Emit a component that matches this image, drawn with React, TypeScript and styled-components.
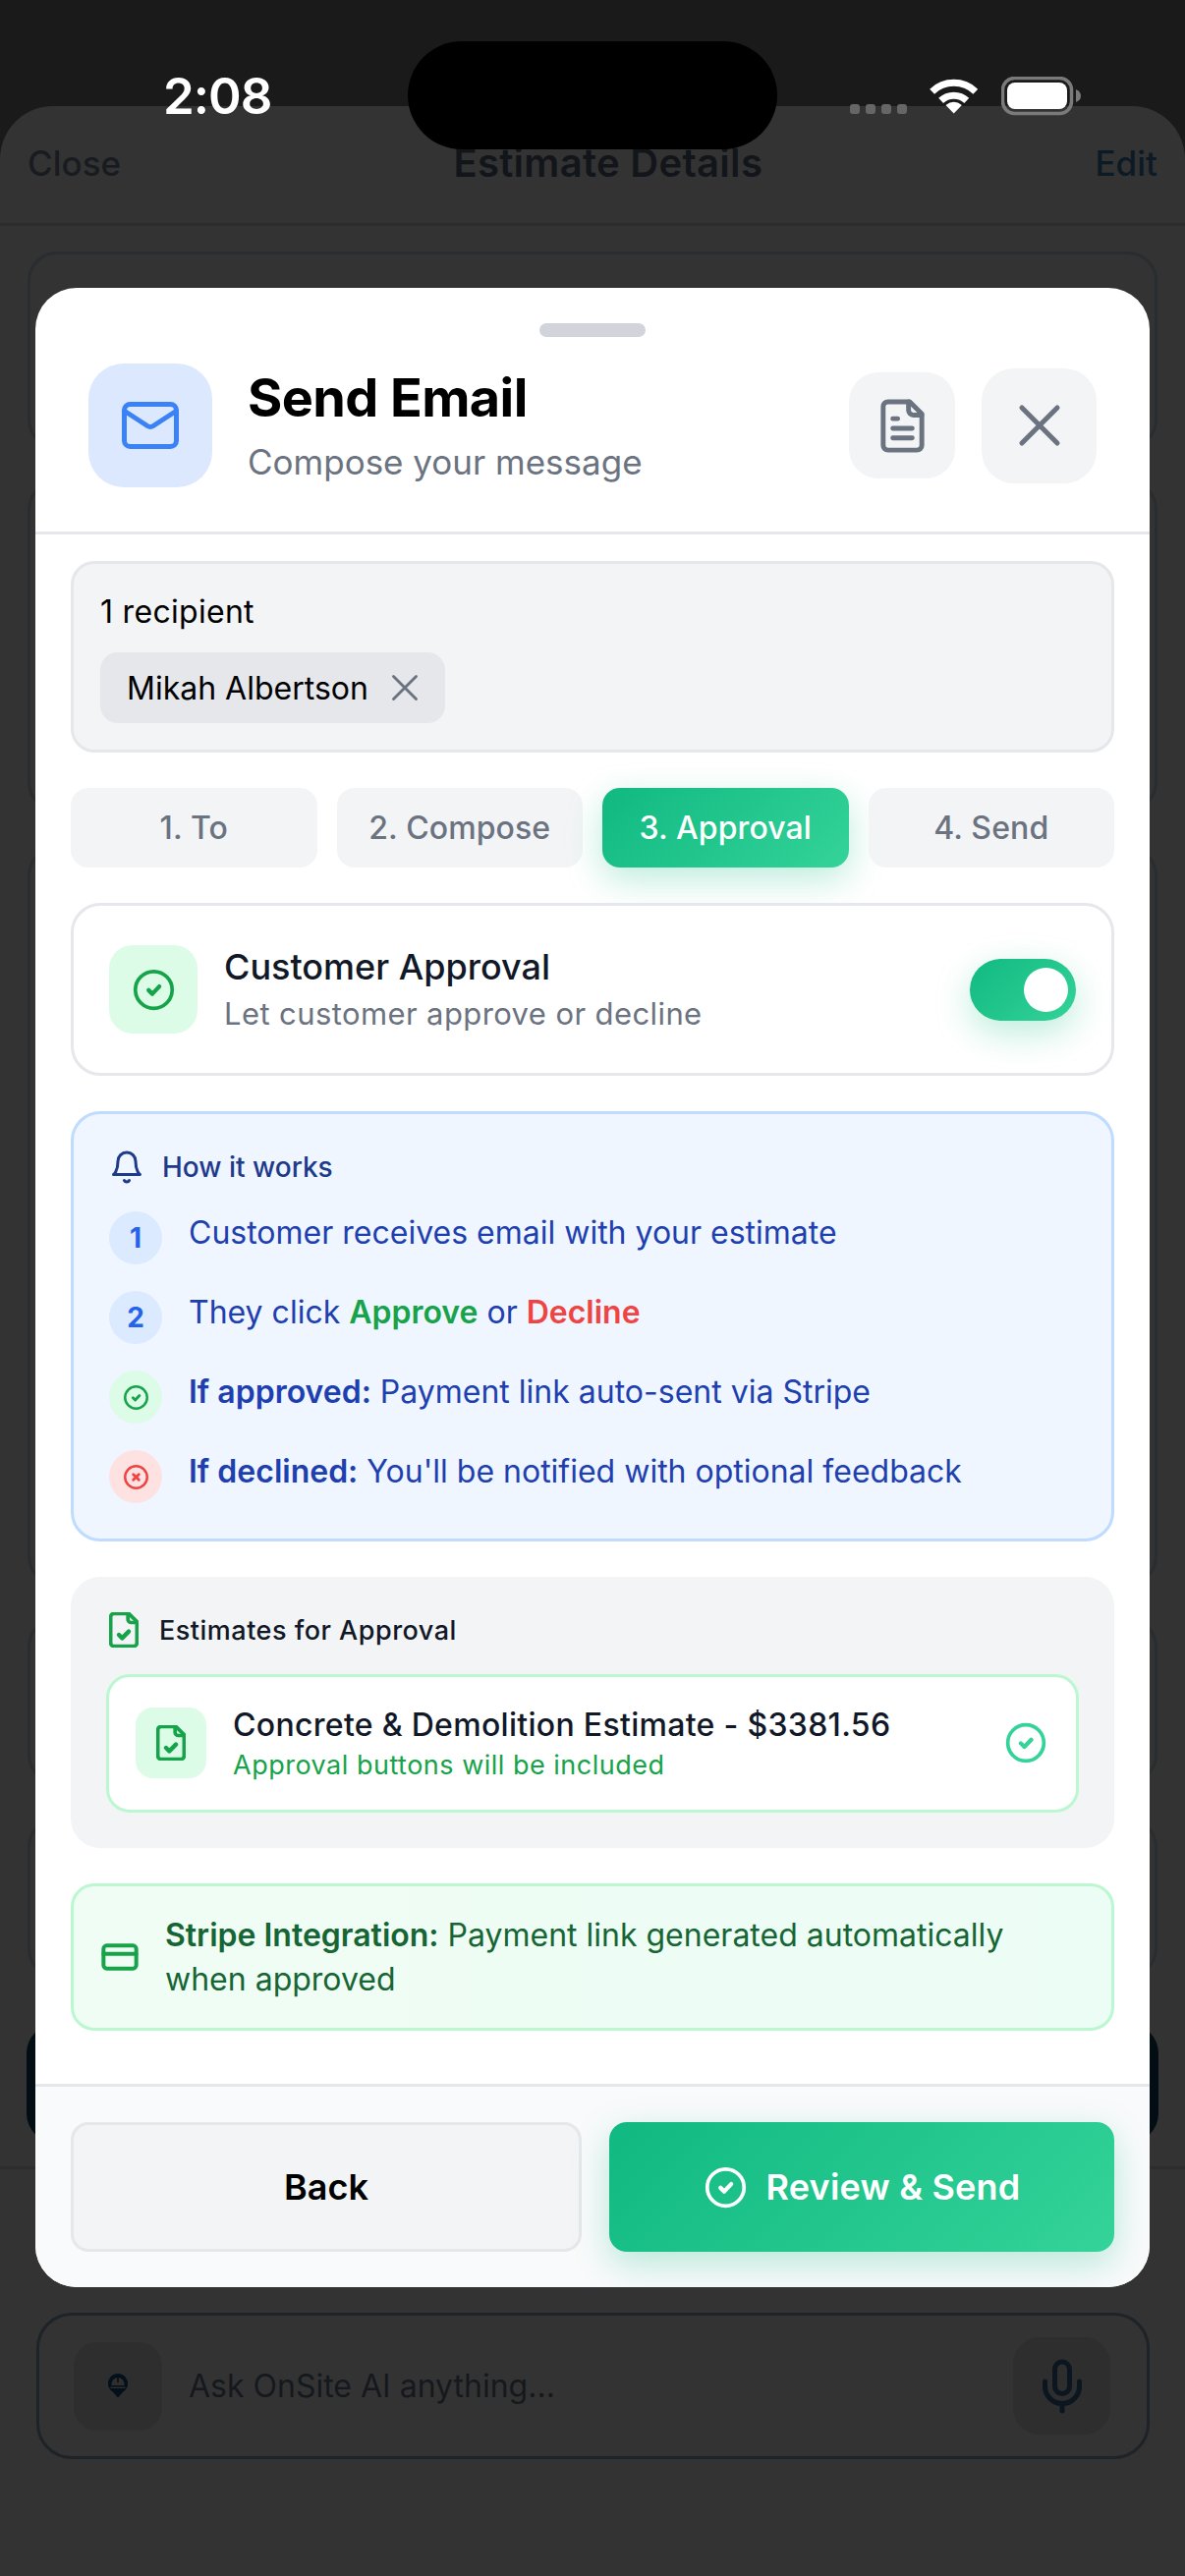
import React from "react";
import styled, { createGlobalStyle } from "styled-components";

const Global = createGlobalStyle`
  html, body { margin: 0; padding: 0; background: #1a1a1a; }
  * { box-sizing: border-box; }
  svg { flex: none; }
  body { font-family: Inter, "Liberation Sans", sans-serif; }
`;

const Page = styled.div`
  position: relative;
  width: 1206px;
  height: 2622px;
  overflow: hidden;
  background: #1a1a1a;
  padding-top: 108px;
`;

/* ---------- dimmed page behind the modal ---------- */
const Sheet = styled.div`
  height: 2514px;
  background: #333333;
  border-radius: 54px 54px 0 0;
  display: flex;
  flex-direction: column;
`;
const Nav = styled.div`
  height: 122px;
  padding: 30px 28px 0;
  border-bottom: 3px solid #2a2c2e;
  display: flex;
  justify-content: space-between;
  font-size: 35px;
  line-height: 56px;
  font-weight: 500;
  color: #181c20;
`;
const NavTitle = styled.span`
  font-weight: 600;
  font-size: 40px;
  letter-spacing: 0.3px;
  color: #12161a;
`;
const NavEdit = styled.span`
  font-weight: 500;
  color: #0c1a26;
`;
const BgList = styled.div`
  padding: 26px 28px 0;
  display: flex;
  flex-direction: column;
`;
const BgCard = styled.div<{ $h: number; $gap: number }>`
  height: ${(p) => p.$h}px;
  margin-bottom: ${(p) => p.$gap}px;
  border: 3px solid #2a2d30;
  border-radius: 30px;
`;
const BgButton = styled.div`
  height: 121px;
  background: #030d14;
  border-radius: 30px;
  margin: 0 -1px;
`;
const BgDivider = styled.div`
  height: 3px;
  margin-top: 24px;
  background: #2d2d2d;
`;
const InputBar = styled.div`
  height: 149px;
  margin: 146px 36px 0 37px;
  border: 3px solid #1e2328;
  border-radius: 36px;
  padding: 0 37px 0 35px;
  display: flex;
  align-items: center;
`;
const HelmetBox = styled.div`
  width: 90px;
  height: 90px;
  border-radius: 24px;
  background: #2e2e2e;
  display: flex;
  align-items: center;
  justify-content: center;
`;
const InputText = styled.span`
  flex: 1;
  margin-left: 27px;
  font-size: 32px;
  color: #15191e;
`;
const MicBox = styled.div`
  width: 99px;
  height: 99px;
  border-radius: 27px;
  background: #2e2e2e;
  display: flex;
  align-items: center;
  justify-content: center;
`;

/* ---------- status bar ---------- */
const Island = styled.div`
  position: absolute;
  left: 415px;
  top: 42px;
  width: 376px;
  height: 110px;
  border-radius: 55px;
  background: #000;
`;
const Time = styled.div`
  position: absolute;
  left: 166px;
  top: 67px;
  font-size: 51px;
  line-height: 62px;
  font-weight: 600;
  color: #fff;
  letter-spacing: -1px;
`;
const StatusIcons = styled.div`
  position: absolute;
  left: 865px;
  top: 78px;
  display: flex;
  align-items: flex-start;
  gap: 22px;
`;
const Dots = styled.div`
  display: flex;
  gap: 6px;
  margin-top: 28px;
`;
const Dot = styled.span`
  width: 10px;
  height: 10px;
  border-radius: 3px;
  background: #666;
`;

/* ---------- modal ---------- */
const Modal = styled.div`
  position: absolute;
  left: 36px;
  top: 293px;
  width: 1134px;
  background: #fff;
  border-radius: 42px;
  overflow: hidden;
`;
const Handle = styled.div`
  width: 108px;
  height: 14px;
  margin: 36px auto 0;
  border-radius: 7px;
  background: #d1d5db;
`;
const Header = styled.div`
  display: flex;
  align-items: center;
  padding: 27px 54px 45px;
  border-bottom: 3px solid #e5e7eb;
`;
const MailBox = styled.div`
  width: 126px;
  height: 126px;
  border-radius: 36px;
  background: #dbe8fe;
  display: flex;
  align-items: center;
  justify-content: center;
`;
const HeaderText = styled.div`
  flex: 1;
  margin-left: 36px;
`;
const Title = styled.div`
  font-size: 54px;
  line-height: 60px;
  font-weight: 700;
  color: #000;
  letter-spacing: -0.6px;
`;
const Subtitle = styled.div`
  margin-top: 14px;
  font-size: 35px;
  line-height: 42px;
  color: #6b7280;
`;
const IconBtn = styled.div<{ $size: number; $radius: number }>`
  width: ${(p) => p.$size}px;
  height: ${(p) => p.$size}px;
  border-radius: ${(p) => p.$radius}px;
  margin-left: 27px;
  background: #f3f4f6;
  display: flex;
  align-items: center;
  justify-content: center;
`;
const Body = styled.div`
  padding: 27px 36px 54px;
  display: flex;
  flex-direction: column;
  gap: 36px;
`;
const Recipients = styled.div`
  height: 195px;
  padding: 27px 27px;
  background: #f3f4f6;
  border: 3px solid #e5e7eb;
  border-radius: 24px;
`;
const RecipientLabel = styled.div`
  font-size: 32px;
  line-height: 44px;
  font-weight: 400;
  letter-spacing: 0.3px;
  color: #000;
`;
const Chip = styled.div`
  width: 351px;
  height: 72px;
  margin-top: 19px;
  padding: 0 20px 0 27px;
  display: flex;
  align-items: center;
  gap: 14px;
  border-radius: 18px;
  background: #e5e7eb;
  font-size: 32px;
  color: #000;
  white-space: nowrap;
`;
const Tabs = styled.div`
  display: grid;
  grid-template-columns: repeat(4, 1fr);
  gap: 20px;
`;
const Tab = styled.div<{ $active?: boolean }>`
  height: 81px;
  border-radius: 18px;
  display: flex;
  align-items: center;
  justify-content: center;
  font-size: 32px;
  font-weight: 500;
  letter-spacing: 0.1px;
  color: ${(p) => (p.$active ? "#fff" : "#6b7280")};
  background: ${(p) =>
    p.$active ? "linear-gradient(135deg, #10b981, #34d399)" : "#f3f4f6"};
  box-shadow: ${(p) =>
    p.$active ? "0 12px 36px rgba(16, 185, 129, 0.28)" : "none"};
`;
const ApprovalCard = styled.div`
  padding: 40px 36px;
  border: 3px solid #e5e7eb;
  border-radius: 30px;
  background: #fff;
  display: flex;
  align-items: center;
`;
const CheckBox = styled.div`
  width: 90px;
  height: 90px;
  border-radius: 24px;
  background: #dcfce7;
  display: flex;
  align-items: center;
  justify-content: center;
`;
const ApprovalText = styled.div`
  flex: 1;
  margin-left: 27px;
`;
const ApprovalTitle = styled.div`
  font-size: 36px;
  line-height: 44px;
  font-weight: 500;
  color: #111827;
`;
const ApprovalSub = styled.div`
  margin-top: 6px;
  font-size: 31px;
  line-height: 40px;
  color: #6b7280;
  letter-spacing: 0.4px;
`;
const Toggle = styled.div`
  width: 108px;
  height: 63px;
  padding: 9px 8px;
  border-radius: 32px;
  display: flex;
  justify-content: flex-end;
  background: linear-gradient(135deg, #10b981, #34d399);
  box-shadow: 0 12px 36px rgba(16, 185, 129, 0.28);
`;
const Knob = styled.div`
  width: 45px;
  height: 45px;
  border-radius: 50%;
  background: #fff;
`;
const InfoBox = styled.div`
  padding: 36px;
  background: #eff6ff;
  border: 3px solid #bfdbfe;
  border-radius: 30px;
`;
const InfoHeader = styled.div`
  height: 36px;
  display: flex;
  align-items: center;
  gap: 18px;
  margin-bottom: 27px;
  font-size: 28px;
  font-weight: 500;
  color: #1e3a8a;
`;
const InfoRows = styled.div`
  display: flex;
  flex-direction: column;
  gap: 27px;
`;
const InfoRow = styled.div`
  display: flex;
  gap: 27px;
  font-size: 32px;
  line-height: 44px;
  color: #1e40af;
  white-space: nowrap;
`;
const Badge = styled.div<{ $bg: string }>`
  width: 54px;
  height: 54px;
  border-radius: 50%;
  flex: none;
  background: ${(p) => p.$bg};
  display: flex;
  align-items: center;
  justify-content: center;
  font-size: 28px;
  font-weight: 700;
  color: #2563eb;
`;
const Strong = styled.b<{ $color?: string }>`
  font-weight: 600;
  color: ${(p) => p.$color || "inherit"};
`;
const EstimatesBox = styled.div`
  padding: 36px;
  background: #f3f4f6;
  border-radius: 30px;
`;
const EstimatesHeader = styled.div`
  height: 36px;
  display: flex;
  align-items: center;
  gap: 21px;
  margin-bottom: 27px;
  padding-left: 3px;
  font-size: 27px;
  font-weight: 500;
  color: #111827;
  letter-spacing: 0.5px;
`;
const EstimateCard = styled.div`
  padding: 31px 29px 32px 27px;
  border: 3px solid #bbf7d0;
  border-radius: 24px;
  background: #fff;
  display: flex;
  align-items: center;
`;
const FileBox = styled.div`
  width: 72px;
  height: 72px;
  border-radius: 18px;
  background: #dcfce7;
  display: flex;
  align-items: center;
  justify-content: center;
`;
const EstimateText = styled.div`
  flex: 1;
  margin-left: 27px;
`;
const EstimateTitle = styled.div`
  font-size: 32px;
  line-height: 36px;
  font-weight: 500;
  color: #111827;
  letter-spacing: 0.3px;
`;
const EstimateSub = styled.div`
  margin-top: 10px;
  font-size: 27px;
  line-height: 26px;
  color: #16a34a;
  letter-spacing: 0.5px;
`;
const StripeBox = styled.div`
  padding: 27px 27px;
  background: linear-gradient(90deg, #f0fdf4, #ecfdf5);
  border: 3px solid #bbf7d0;
  border-radius: 24px;
  display: flex;
  align-items: center;
  gap: 26px;
  font-size: 32px;
  line-height: 45px;
  color: #166534;
`;
const Footer = styled.div`
  padding: 36px;
  background: #f9fafb;
  border-top: 3px solid #e5e7eb;
  display: grid;
  grid-template-columns: 520px 514px;
  gap: 28px;
`;
const BackBtn = styled.div`
  height: 132px;
  border: 3px solid #e5e7eb;
  border-radius: 18px;
  background: #f3f4f6;
  display: flex;
  align-items: center;
  justify-content: center;
  font-size: 36px;
  font-weight: 600;
  color: #000;
`;
const SendBtn = styled.div`
  height: 132px;
  border-radius: 18px;
  background: linear-gradient(135deg, #10b981, #34d399);
  box-shadow: 0 12px 36px rgba(16, 185, 129, 0.28);
  display: flex;
  align-items: center;
  justify-content: center;
  gap: 19px;
  font-size: 36px;
  font-weight: 600;
  letter-spacing: 0.2px;
  color: #fff;
`;

/* ---------- drawings ---------- */
type IconProps = { size: number; color: string; stroke?: number };

const Svg = ({ size, color, stroke = 2, children }: IconProps & { children: React.ReactNode }) => (
  <svg width={size} height={size} viewBox="0 0 24 24" fill="none" stroke={color} strokeWidth={stroke} strokeLinecap="round" strokeLinejoin="round">
    {children}
  </svg>
);
const CheckCircle = (p: IconProps) => (
  <Svg {...p}>
    <circle cx="12" cy="12" r="10" />
    <path d="m9.2 12.2 2 2 3.8-4" strokeWidth={(p.stroke || 2) * 1.15} />
  </Svg>
);
const XCircle = (p: IconProps) => (
  <Svg {...p}>
    <circle cx="12" cy="12" r="10" />
    <path d="m9.5 9.5 5 5M14.5 9.5l-5 5" strokeWidth={(p.stroke || 2) * 1.15} />
  </Svg>
);
const Cross = (p: IconProps) => (
  <Svg {...p}>
    <path d="M18 6 6 18M6 6l12 12" />
  </Svg>
);
const FileText = (p: IconProps) => (
  <Svg {...p}>
    <path d="M15 2H6a2 2 0 0 0-2 2v16a2 2 0 0 0 2 2h12a2 2 0 0 0 2-2V7Z" />
    <path d="M14.5 2v3.5a2 2 0 0 0 2 2H20" />
    <path d="M10 9H8M16 13H8M16 17H8" />
  </Svg>
);
const FileCheck = (p: IconProps) => (
  <svg width={p.size * 0.75} height={p.size * 0.9} viewBox="3 1.2 18 21.6" fill="none" stroke={p.color} strokeWidth={p.stroke || 2} strokeLinecap="round" strokeLinejoin="round">
    <path d="M15 2H6a2 2 0 0 0-2 2v16a2 2 0 0 0 2 2h12a2 2 0 0 0 2-2V7Z" />
    <path d="M14.5 2v3.5a2 2 0 0 0 2 2H20" />
    <path d="m9 15 2 2 4-4" strokeWidth={(p.stroke || 2) * 1.2} />
  </svg>
);
const Bell = (p: IconProps) => (
  <Svg {...p}>
    <path d="M6 8a6 6 0 0 1 12 0c0 7 3 9 3 9H3s3-2 3-9" />
    <path d="M10.3 21a1.94 1.94 0 0 0 3.4 0" />
  </Svg>
);
const CreditCard = (p: IconProps) => (
  <Svg {...p}>
    <rect x="2" y="5" width="20" height="14" rx="2" />
    <line x1="2" y1="10" x2="22" y2="10" />
  </Svg>
);
const Mic = (p: IconProps) => (
  <Svg {...p}>
    <path d="M12 2a3 3 0 0 0-3 3v7a3 3 0 0 0 6 0V5a3 3 0 0 0-3-3Z" />
    <path d="M19 10v2a7 7 0 0 1-14 0v-2" />
    <line x1="12" y1="19" x2="12" y2="22" />
  </Svg>
);
const MailIcon = () => (
  <svg width="58" height="48" viewBox="0 0 58 48" fill="none" stroke="#3b82f6" strokeWidth="5" strokeLinecap="round" strokeLinejoin="round">
    <rect x="2.5" y="2.5" width="53" height="43" rx="6" />
    <path d="M3 9.5 26 24.5Q29 26.5 32 24.5L55 9.5" />
  </svg>
);
const HelmetPin = () => (
  <svg width="20" height="25" viewBox="0 0 20 25">
    <path d="M10 0a10 10 0 0 1 5 18.7L10 24.5 5 18.7A10 10 0 0 1 10 0Z" fill="#03101a" />
    <path d="M3.5 12v-1.5a6.5 6.5 0 0 1 13 0V12Z" fill="#2e2e2e" />
    <path d="M2.5 13.5h15v1.5h-15Z" fill="#2e2e2e" />
    <path d="M9.2 4h1.6v5H9.2Z" fill="#03101a" />
  </svg>
);
const WifiIcon = () => (
  <svg width="52" height="38" viewBox="0 0 52 38" fill="none" stroke="#fff" strokeWidth="7">
    <path d="M3.6 15.2A32 32 0 0 1 47.8 15.2" />
    <path d="M12.6 24.4A19 19 0 0 1 38.8 24.4" />
    <path d="M25.7 37.5 17.5 29Q25.7 22.6 33.9 29Z" fill="#fff" stroke="none" />
  </svg>
);
const BatteryIcon = () => (
  <svg width="82" height="40" viewBox="0 0 82 40">
    <rect x="1.5" y="1.5" width="70" height="36" rx="12" fill="none" stroke="#7a7a7a" strokeWidth="3.5" />
    <rect x="6" y="6" width="61" height="27" rx="8" fill="#fff" />
    <path d="M76 13q5 2 5 6.5T76 26Z" fill="#7a7a7a" />
  </svg>
);

export default function App() {
  return (
    <Page>
      <Global />
      <Sheet>
        <Nav>
          <span>Close</span>
          <NavTitle>Estimate Details</NavTitle>
          <NavEdit>Edit</NavEdit>
        </Nav>
        <BgList>
          <BgCard $h={201} $gap={32} />
          <BgCard $h={337} $gap={35} />
          <BgCard $h={753} $gap={32} />
          <BgCard $h={170} $gap={34} />
          <BgCard $h={163} $gap={47} />
          <BgButton />
        </BgList>
        <BgDivider />
        <InputBar>
          <HelmetBox>
            <HelmetPin />
          </HelmetBox>
          <InputText>Ask OnSite AI anything...</InputText>
          <MicBox>
            <Mic size={60} color="#0b1620" />
          </MicBox>
        </InputBar>
      </Sheet>

      <Island />
      <Time>2:08</Time>
      <StatusIcons>
        <Dots>
          <Dot />
          <Dot />
          <Dot />
          <Dot />
        </Dots>
        <WifiIcon />
        <BatteryIcon />
      </StatusIcons>

      <Modal>
        <Handle />
        <Header>
          <MailBox>
            <MailIcon />
          </MailBox>
          <HeaderText>
            <Title>Send Email</Title>
            <Subtitle>Compose your message</Subtitle>
          </HeaderText>
          <IconBtn $size={108} $radius={30}>
            <FileText size={59} color="#6b7280" />
          </IconBtn>
          <IconBtn $size={117} $radius={33}>
            <Cross size={72} color="#6b7280" stroke={1.7} />
          </IconBtn>
        </Header>
        <Body>
          <Recipients>
            <RecipientLabel>1 recipient</RecipientLabel>
            <Chip>
              Mikah Albertson
              <Cross size={46} color="#6b7280" stroke={1.5} />
            </Chip>
          </Recipients>
          <Tabs>
            <Tab>1. To</Tab>
            <Tab>2. Compose</Tab>
            <Tab $active>3. Approval</Tab>
            <Tab>4. Send</Tab>
          </Tabs>
          <ApprovalCard>
            <CheckBox>
              <CheckCircle size={45} color="#16a34a" />
            </CheckBox>
            <ApprovalText>
              <ApprovalTitle>Customer Approval</ApprovalTitle>
              <ApprovalSub>Let customer approve or decline</ApprovalSub>
            </ApprovalText>
            <Toggle>
              <Knob />
            </Toggle>
          </ApprovalCard>
          <InfoBox>
            <InfoHeader>
              <Bell size={36} color="#1e3a8a" />
              How it works
            </InfoHeader>
            <InfoRows>
              <InfoRow>
                <Badge $bg="#dbeafe">1</Badge>
                <span>Customer receives email with your estimate</span>
              </InfoRow>
              <InfoRow>
                <Badge $bg="#dbeafe">2</Badge>
                <span>
                  They click <Strong $color="#16a34a">Approve</Strong> or <Strong $color="#ef4444">Decline</Strong>
                </span>
              </InfoRow>
              <InfoRow>
                <Badge $bg="#dcfce7">
                  <CheckCircle size={27} color="#16a34a" stroke={2.2} />
                </Badge>
                <span>
                  <Strong>If approved:</Strong> Payment link auto-sent via Stripe
                </span>
              </InfoRow>
              <InfoRow>
                <Badge $bg="#fee2e2">
                  <XCircle size={27} color="#ef4444" stroke={2.2} />
                </Badge>
                <span>
                  <Strong>If declined:</Strong> You'll be notified with optional feedback
                </span>
              </InfoRow>
            </InfoRows>
          </InfoBox>
          <EstimatesBox>
            <EstimatesHeader>
              <FileCheck size={40} color="#16a34a" stroke={2.2} />
              Estimates for Approval
            </EstimatesHeader>
            <EstimateCard>
              <FileBox>
                <FileCheck size={40} color="#16a34a" stroke={2.2} />
              </FileBox>
              <EstimateText>
                <EstimateTitle>Concrete &amp; Demolition Estimate - $3381.56</EstimateTitle>
                <EstimateSub>Approval buttons will be included</EstimateSub>
              </EstimateText>
              <CheckCircle size={44} color="#34d399" />
            </EstimateCard>
          </EstimatesBox>
          <StripeBox>
            <CreditCard size={40} color="#16a34a" stroke={2.4} />
            <span>
              <Strong>Stripe Integration:</Strong> Payment link generated automatically when approved
            </span>
          </StripeBox>
        </Body>
        <Footer>
          <BackBtn>Back</BackBtn>
          <SendBtn>
            <CheckCircle size={45} color="#fff" />
            Review &amp; Send
          </SendBtn>
        </Footer>
      </Modal>
    </Page>
  );
}
